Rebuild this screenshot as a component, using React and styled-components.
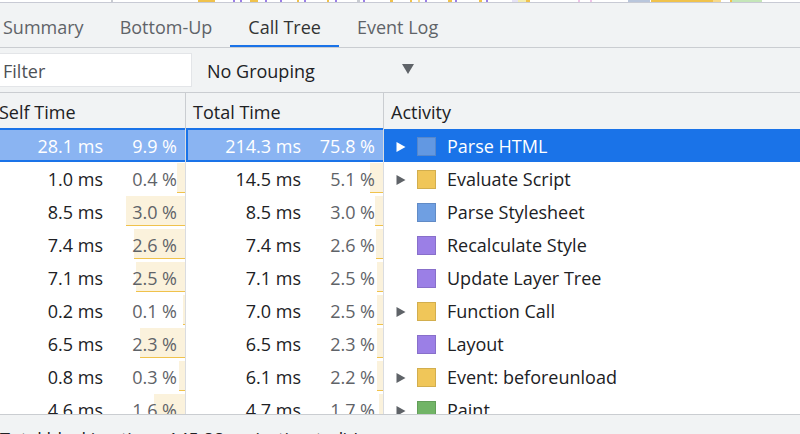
import React from "react";
import styled, { createGlobalStyle } from "styled-components";

const GlobalStyle = createGlobalStyle`
  html, body {
    margin: 0;
    padding: 0;
    overflow: hidden;
    background: #f1f3f4;
  }
  * {
    box-sizing: border-box;
  }
`;

// timeline overview segments seen at the very top (x, width, colour)
const overview = [
  [111, 2, "#c9ccd2"], [198, 17, "#f0c24c"], [233, 2, "#9b7fe6"], [240, 2, "#9b7fe6"],
  [250, 8, "#f0c24c"], [265, 2, "#9b7fe6"], [280, 2, "#9b7fe6"], [297, 2, "#f0c24c"],
  [304, 2, "#9b7fe6"], [327, 2, "#f0c24c"], [335, 2, "#9b7fe6"], [357, 3, "#c9ccd2"],
  [363, 2, "#9b7fe6"], [390, 3, "#f0c24c"], [410, 2, "#f0c24c"], [418, 2, "#f7d98a"],
  [425, 2, "#9b7fe6"], [448, 4, "#f0c24c"], [455, 2, "#9b7fe6"], [479, 3, "#f0c24c"],
  [486, 2, "#9b7fe6"], [512, 6, "#e6e2f5"], [518, 10, "#f4eeb0"], [526, 4, "#f0c24c"],
  [578, 2, "#efc4e8"], [590, 2, "#efc4e8"], [628, 22, "#b9c6dc"], [651, 62, "#f0c24c"],
  [713, 8, "#f7d98a"], [730, 2, "#f0c24c"], [732, 30, "#c5e6b9"],
];

const rows = [
  { self: "28.1", selfPct: 9.9, total: "214.3", totalPct: 75.8, name: "Parse HTML", color: "#6f9fe2", expand: true, selected: true },
  { self: "1.0", selfPct: 0.4, total: "14.5", totalPct: 5.1, name: "Evaluate Script", color: "#f0c659", expand: true },
  { self: "8.5", selfPct: 3.0, total: "8.5", totalPct: 3.0, name: "Parse Stylesheet", color: "#6f9fe2" },
  { self: "7.4", selfPct: 2.6, total: "7.4", totalPct: 2.6, name: "Recalculate Style", color: "#9b7fe6" },
  { self: "7.1", selfPct: 2.5, total: "7.1", totalPct: 2.5, name: "Update Layer Tree", color: "#9b7fe6" },
  { self: "0.2", selfPct: 0.1, total: "7.0", totalPct: 2.5, name: "Function Call", color: "#f0c659", expand: true },
  { self: "6.5", selfPct: 2.3, total: "6.5", totalPct: 2.3, name: "Layout", color: "#9b7fe6" },
  { self: "0.8", selfPct: 0.3, total: "6.1", totalPct: 2.2, name: "Event: beforeunload", color: "#f0c659", expand: true },
  { self: "4.6", selfPct: 1.6, total: "4.7", totalPct: 1.7, name: "Paint", color: "#71b466", expand: true },
];

const SELF_MAX = 9.9;
const TOTAL_MAX = 75.8;

function App() {
  return (
    <>
      <GlobalStyle />
      <Panel>
        <Overview>
          <svg width="808" height="2" viewBox="0 0 808 2">
            {overview.map(([x, w, c], i) => (
              <rect key={i} x={x + 8} y="0" width={w} height="2" fill={c} />
            ))}
          </svg>
        </Overview>

        <TabBar>
          <Tab>Summary</Tab>
          <Tab>Bottom-Up</Tab>
          <Tab active>Call Tree</Tab>
          <Tab>Event Log</Tab>
        </TabBar>

        <Toolbar>
          <FilterInput placeholder="Filter" />
          <Grouping>
            <span>No Grouping</span>
            <svg width="12" height="10" viewBox="0 0 12 10">
              <path d="M0 0 H12 L6 10 Z" fill="#5f6368" />
            </svg>
          </Grouping>
        </Toolbar>

        <Table>
          <HeaderRow>
            <HeadCell width="194px">Self Time</HeadCell>
            <HeadCell width="198px">Total Time</HeadCell>
            <HeadCell last>Activity</HeadCell>
          </HeaderRow>

          {rows.map((r) => (
            <Row key={r.name}>
              <TimeCell width="194px" selected={r.selected}>
                <Bar
                  selected={r.selected}
                  style={{ width: `${(r.selfPct / SELF_MAX) * 194}px` }}
                />
                <Ms selected={r.selected}>{r.self} ms</Ms>
                <Pct selected={r.selected}>{r.selfPct.toFixed(1)} %</Pct>
              </TimeCell>
              <TimeCell width="198px" selected={r.selected}>
                <Bar
                  selected={r.selected}
                  style={{ width: `${(r.totalPct / TOTAL_MAX) * 197}px` }}
                />
                <Ms selected={r.selected}>{r.total} ms</Ms>
                <Pct selected={r.selected}>{r.totalPct.toFixed(1)} %</Pct>
              </TimeCell>
              <ActivityCell selected={r.selected}>
                <Arrow selected={r.selected} visible={r.expand}>
                  <svg width="10" height="12" viewBox="0 0 10 12">
                    <path d="M0.5 1 L9.5 6 L0.5 11 Z" fill="currentColor" />
                  </svg>
                </Arrow>
                <Swatch color={r.color} selected={r.selected} />
                <span>{r.name}</span>
              </ActivityCell>
            </Row>
          ))}
        </Table>

        <StatusBar>Total blocking time: 145.88ms (estimated) Learn more</StatusBar>
      </Panel>
    </>
  );
}

export default App;

const Panel = styled.div`
  margin-left: -8px;
  width: 808px;
  height: 434px;
  display: flex;
  flex-direction: column;
  font-family: "Open Sans", "Noto Sans", sans-serif;
  font-size: 18px;
  color: #202124;
  background: #f1f3f4;
  overflow: hidden;
`;

const Overview = styled.div`
  height: 3px;
  flex: none;
  background: #fff;
  border-bottom: 1px solid #c8cad4;
  line-height: 0;
  svg {
    display: block;
  }
`;

const TabBar = styled.div`
  height: 45px;
  flex: none;
  display: flex;
  align-items: stretch;
  margin-left: -7px;
  border-bottom: 1px solid #cacdd1;
`;

const Tab = styled.div`
  display: flex;
  align-items: center;
  padding: 5px 18px 0;
  color: ${(p) => (p.active ? "#333" : "#5f6368")};
  border-bottom: 2px solid ${(p) => (p.active ? "#1a73e8" : "transparent")};
  white-space: nowrap;
`;

const Toolbar = styled.div`
  height: 45px;
  flex: none;
  display: flex;
  align-items: center;
  border-bottom: 1px solid #cacdd1;
`;

const FilterInput = styled.input`
  width: 200px;
  height: 34px;
  margin-top: -1px;
  padding: 2px 0 0 10px;
  border: 1px solid #e3e5e8;
  background: #fff;
  font: inherit;
  color: #202124;
  outline: none;
  &::placeholder {
    color: #4d5156;
    opacity: 1;
  }
`;

const Grouping = styled.div`
  display: flex;
  align-items: center;
  margin-left: 15px;
  width: 207px;
  justify-content: space-between;
  padding-top: 2px;
  svg {
    margin-top: -4px;
  }
`;

const Table = styled.div`
  flex: 1;
  min-height: 0;
  overflow: hidden;
  display: flex;
  flex-direction: column;
  background: #fff;
  border-bottom: 1px solid #cacdd1;
`;

const HeaderRow = styled.div`
  height: 36px;
  flex: none;
  display: flex;
  background: #f1f3f4;
`;

const HeadCell = styled.div`
  ${(p) => (p.last ? "flex: 1;" : `width: ${p.width}; flex: none;`)}
  display: flex;
  align-items: center;
  padding: 2px 8px 0 7px;
  border-right: ${(p) => (p.last ? "none" : "1px solid #cacdd1")};
`;

const Row = styled.div`
  height: 33px;
  flex: none;
  display: flex;
`;

const TimeCell = styled.div`
  position: relative;
  width: ${(p) => p.width};
  flex: none;
  display: flex;
  align-items: center;
  justify-content: flex-end;
  padding: 1px 8px 0 0;
  border-right: 1px solid #dadce0;
`;

const Bar = styled.div`
  position: absolute;
  right: 0;
  top: 1px;
  bottom: 2px;
  background: ${(p) => (p.selected ? "#8ab4f2" : "#fbf2dc")};
  border-bottom: 1px solid ${(p) => (p.selected ? "#1a73e8" : "#f0c24c")};
  ${(p) =>
    p.selected &&
    `
    top: -1px;
    bottom: 0;
    border-top: 2px solid #1a73e8;
    border-bottom-width: 2px;
    border-left: 2px solid #1a73e8;
  `}
`;

const Ms = styled.span`
  position: relative;
  color: ${(p) => (p.selected ? "#fff" : "#202124")};
`;

const Pct = styled.span`
  position: relative;
  width: 74px;
  text-align: right;
  color: ${(p) => (p.selected ? "#fff" : "#5f6368")};
`;

const ActivityCell = styled.div`
  flex: 1;
  display: flex;
  align-items: center;
  padding: 1px 0 0 12px;
  background: ${(p) => (p.selected ? "#1a73e8" : "transparent")};
  color: ${(p) => (p.selected ? "#fff" : "#202124")};
  white-space: nowrap;
`;

const Arrow = styled.span`
  width: 10px;
  display: flex;
  color: ${(p) => (p.selected ? "#fff" : "#5f6368")};
  visibility: ${(p) => (p.visible ? "visible" : "hidden")};
  margin-top: 1px;
`;

const Swatch = styled.span`
  width: 19px;
  height: 19px;
  margin: 0 11px 0 11px;
  flex: none;
  background: ${(p) => p.color};
  border: 1px solid rgba(0, 0, 0, 0.12);
  opacity: ${(p) => (p.selected ? 0.85 : 1)};
`;

const StatusBar = styled.div`
  height: 19px;
  flex: none;
  padding: 15px 0 0 8px;
  line-height: 18px;
  white-space: nowrap;
  color: #202124;
  background: #f1f3f4;
  overflow: hidden;
`;
